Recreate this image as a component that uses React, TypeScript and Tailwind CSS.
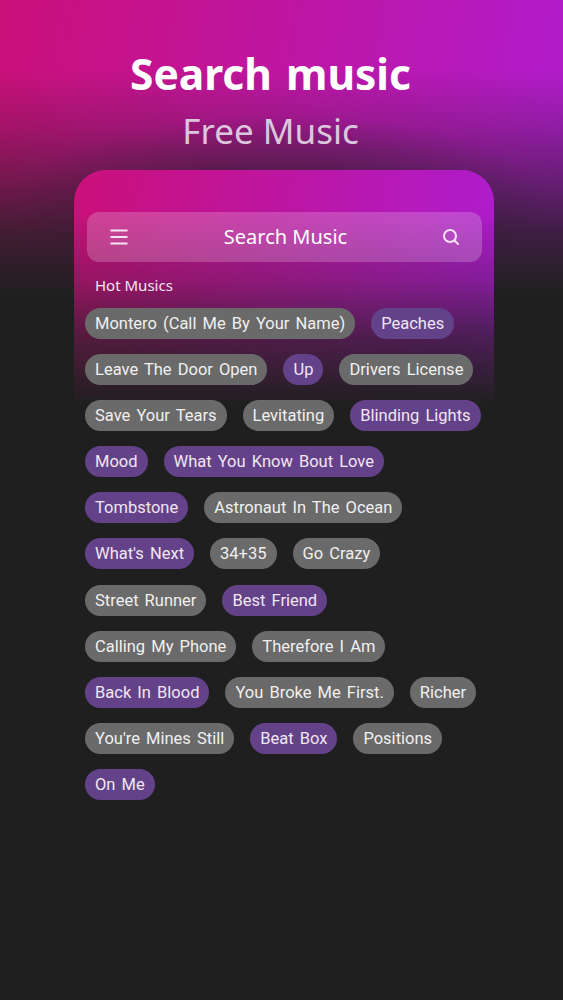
const rows: [string, boolean][][] = [
  [["Montero (Call Me By Your Name)", false], ["Peaches", true]],
  [["Leave The Door Open", false], ["Up", true], ["Drivers License", false]],
  [["Save Your Tears", false], ["Levitating", false], ["Blinding Lights", true]],
  [["Mood", true], ["What You Know Bout Love", true]],
  [["Tombstone", true], ["Astronaut In The Ocean", false]],
  [["What's Next", true], ["34+35", false], ["Go Crazy", false]],
  [["Street Runner", false], ["Best Friend", true]],
  [["Calling My Phone", false], ["Therefore I Am", false]],
  [["Back In Blood", true], ["You Broke Me First.", false], ["Richer", false]],
  [["You're Mines Still", false], ["Beat Box", true], ["Positions", false]],
  [["On Me", true]],
];

export default function App() {
  return (
    <div className="h-[1000px] w-[563px] overflow-hidden bg-[#1f1f1f] bg-[radial-gradient(ellipse_270px_90px_at_50%_205px,rgba(31,31,31,0.55),rgba(31,31,31,0)),linear-gradient(to_bottom,rgba(31,31,31,0)_70px,rgba(31,31,31,0.22)_125px,rgba(31,31,31,0.5)_180px,rgba(31,31,31,0.8)_235px,#1f1f1f_295px),linear-gradient(100deg,#cb1079,#ab1fe2)] font-['Noto_Sans',sans-serif] text-white">
      <h1 className="pr-[22px] pt-[47px] text-center text-[42.5px] font-bold leading-[54px] [word-spacing:3px]">Search music</h1>
      <p className="mt-[3px] pr-[22px] text-center text-[35px] leading-[54px] text-[#dcc6de]">Free Music</p>
      <div className="ml-[74px] mt-[12px] h-[640px] w-[420px] rounded-t-[32px] bg-[linear-gradient(to_bottom,rgba(31,31,31,0)_40px,rgba(31,31,31,0.3)_110px,rgba(31,31,31,0.68)_165px,#1f1f1f_235px),linear-gradient(100deg,#cb1079,#a81fe0)] px-[11px] pt-[42px]">
        <div className="ml-[2px] mr-[1px] flex h-[50px] items-center justify-between rounded-[12px] bg-[rgba(255,255,255,0.2)] pl-[22px] pr-[22px]">
          <svg width="20" height="16" viewBox="0 0 20 16" fill="none" stroke="#f6e4f2" strokeWidth="2">
            <path d="M1.5 1.5h17M1.5 8h17M1.5 14.5h17" />
          </svg>
          <span className="text-[20px] leading-[26px]">Search Music</span>
          <svg width="18" height="18" viewBox="0 0 18 18" fill="none" stroke="#f6e4f2" strokeWidth="2" strokeLinecap="round">
            <circle cx="8" cy="8" r="6" />
            <path d="M12.5 12.5L16 16" />
          </svg>
        </div>
        <p className="mt-[13px] pl-[10px] text-[15px] leading-[20px] text-[#f6e4f2]">Hot Musics</p>
        <div className="mt-[13px] flex flex-col gap-[15.1px]">
          {rows.map((row, i) => (
            <div key={i} className="flex gap-[16px]">
              {row.map(([label, purple]) => (
                <span
                  key={label}
                  className={
                    purple
                      ? "h-[31px] whitespace-nowrap rounded-full bg-[#644289] px-[10px] font-['Roboto',sans-serif] text-[16.5px] leading-[31px] text-[#f0e6f2] [word-spacing:2px]"
                      : "h-[31px] whitespace-nowrap rounded-full bg-[#6a6a6a] px-[10px] font-['Roboto',sans-serif] text-[16.5px] leading-[31px] text-[#f0f0f0] [word-spacing:2px]"
                  }
                >
                  {label}
                </span>
              ))}
            </div>
          ))}
        </div>
      </div>
    </div>
  );
}
